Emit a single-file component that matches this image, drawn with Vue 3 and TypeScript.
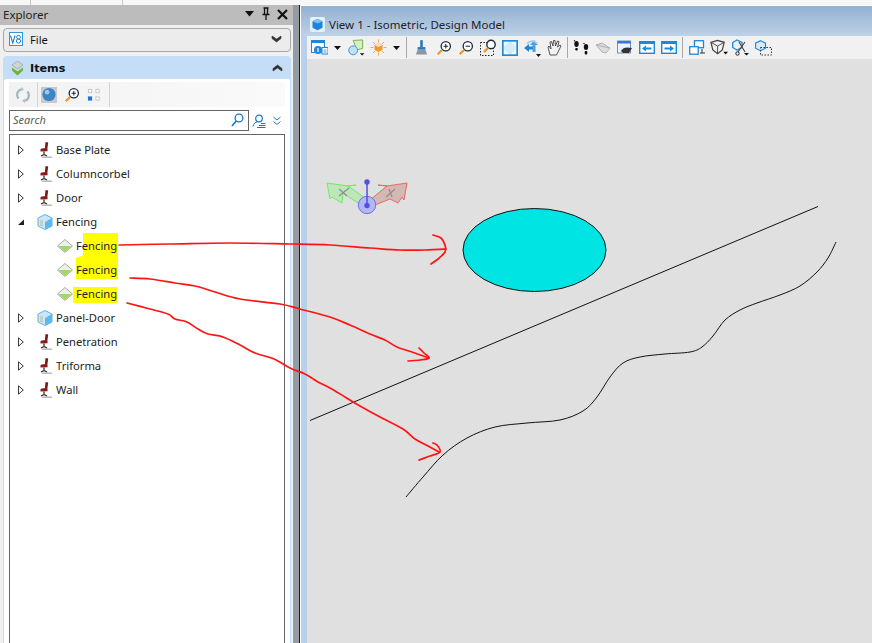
<script setup lang="ts">
interface Row { label: string; icon: 'chair' | 'box' | 'leaf'; arrow: 'closed' | 'open' | 'none'; mark?: string }
const rows: Row[] = [
  { label: 'Base Plate', icon: 'chair', arrow: 'closed' },
  { label: 'Columncorbel', icon: 'chair', arrow: 'closed' },
  { label: 'Door', icon: 'chair', arrow: 'closed' },
  { label: 'Fencing', icon: 'box', arrow: 'open' },
  { label: 'Fencing', icon: 'leaf', arrow: 'none', mark: 'm1' },
  { label: 'Fencing', icon: 'leaf', arrow: 'none', mark: 'm2' },
  { label: 'Fencing', icon: 'leaf', arrow: 'none', mark: 'm3' },
  { label: 'Panel-Door', icon: 'box', arrow: 'closed' },
  { label: 'Penetration', icon: 'chair', arrow: 'closed' },
  { label: 'Triforma', icon: 'chair', arrow: 'closed' },
  { label: 'Wall', icon: 'chair', arrow: 'closed' },
]

type P = [number, number]
function smooth(pts: P[]): string {
  let d = `M${pts[0][0]} ${pts[0][1]}`
  for (let i = 0; i < pts.length - 1; i++) {
    const a = pts[Math.max(i - 1, 0)]
    const b = pts[i]
    const c = pts[i + 1]
    const e = pts[Math.min(i + 2, pts.length - 1)]
    const c1x = b[0] + (c[0] - a[0]) / 6
    const c1y = b[1] + (c[1] - a[1]) / 6
    const c2x = c[0] - (e[0] - b[0]) / 6
    const c2y = c[1] - (e[1] - b[1]) / 6
    d += `C${c1x.toFixed(1)} ${c1y.toFixed(1)} ${c2x.toFixed(1)} ${c2y.toFixed(1)} ${c[0]} ${c[1]}`
  }
  return d
}

const wave = smooth([[406, 497], [423, 477], [443, 455], [467, 438], [495, 427], [527, 423], [560, 420], [583, 411], [597, 397], [610, 377], [623, 363], [640, 357], [665, 354], [690, 352], [702, 347], [713, 336], [725, 320], [740, 310], [757, 303], [780, 295], [800, 286], [817, 272], [828, 258], [836, 242]])
const red = [
  [[119, 245], [170, 244], [230, 243], [290, 244], [330, 245], [370, 248], [400, 250], [425, 250], [446, 249]],
  [[433, 235], [441, 238], [445, 245], [445, 252], [438, 259], [431, 264]],
  [[130, 278], [150, 279], [175, 283], [195, 286], [215, 292], [240, 299], [280, 304], [300, 309], [330, 317], [350, 325], [370, 334], [385, 340], [397, 347], [412, 352], [429, 358]],
  [[419, 348], [424, 353], [429, 358], [420, 360], [408, 361]],
  [[127, 303], [150, 309], [168, 314], [175, 319], [187, 322], [198, 329], [208, 334], [223, 337], [240, 345], [255, 353], [274, 359], [290, 368], [305, 374], [318, 382], [330, 388], [345, 397], [360, 406], [380, 417], [403, 429], [415, 439], [428, 446], [439, 452]],
  [[433, 443], [437, 445], [440, 452], [430, 456], [419, 460]],
].map((p) => smooth(p as P[]))
</script>

<template>
  <div class="screen">
    <div class="topstrip"><i class="tick t1"></i><i class="tick t2"></i></div>
    <div class="main">
      <aside class="explorer">
        <header class="ex-title">
          <span>Explorer</span>
          <div class="ex-tools">
            <svg width="10" height="6" viewBox="0 0 10 6"><path d="M0 0h9L4.500 5.500z" fill="#111"/></svg>
            <svg width="10" height="14" viewBox="0 0 10 14"><path d="M2.500 1h5M3.500 1v6M6.500 1v6M1.500 7.500h7M5 8v5" stroke="#111" stroke-width="1.300" fill="none"/></svg>
            <svg width="11" height="11" viewBox="0 0 11 11"><path d="M1 1l9 9M10 1l-9 9" stroke="#111" stroke-width="2.200"/></svg>
          </div>
        </header>
        <div class="ex-body">
          <div class="file-bar">
            <svg class="v8" width="14" height="14" viewBox="0 0 14 14"><rect x=".5" y=".5" width="13" height="13" fill="#fff" stroke="#2e95e0"/><path d="M1.500 3.500l2.300 7.500 2.300-7.500" fill="none" stroke="#1e7fd0" stroke-width="1.100"/><circle cx="9.500" cy="5.200" r="1.900" fill="none" stroke="#1e7fd0"/><circle cx="9.500" cy="9" r="2.100" fill="none" stroke="#1e7fd0"/></svg>
            <span>File</span>
            <svg class="chev" width="11" height="8" viewBox="0 0 11 8"><path d="M1 1l4.500 3L10 1v2.500L5.500 7 1 3.500z" fill="#333" stroke="#333" stroke-width=".6"/></svg>
          </div>
          <section class="items">
            <div class="items-head">
              <svg width="13" height="15" viewBox="0 0 13 15"><path d="M6.500 0L12 4 6.500 8 1 4z" fill="#cfd4d0" stroke="#8d968e" stroke-width=".6"/><path d="M1 6.500l5.500 4 5.500-4v3l-5.500 5-5.500-5z" fill="#6fb52f"/></svg>
              <b>Items</b>
              <svg class="chev" width="11" height="8" viewBox="0 0 11 8"><path d="M1 7l4.500-3L10 7V4.500L5.500 1 1 4.500z" fill="#333" stroke="#333" stroke-width=".6"/></svg>
            </div>
            <div class="items-card">
              <div class="mini-bar">
                <div class="mini-group first">
                  <svg width="16" height="18" viewBox="0 0 18 20"><path d="M4 14A6.500 6.500 0 0 1 7 3.500M14 6a6.500 6.500 0 0 1-3 10.500" fill="none" stroke="#9fb8bd" stroke-width="2.400"/><path d="M7 1l3 2.500L7 6zM11 14l-3 2.500L11 19z" fill="#aebfc3"/></svg>
                </div>
                <div class="mini-group second">
                  <svg width="16" height="16" viewBox="0 0 17 17"><rect width="17" height="17" fill="#c9c9c9"/><circle cx="8.500" cy="8" r="7" fill="#3d83c5"/><circle cx="6.500" cy="5.500" r="2.500" fill="#9cc8ea"/></svg>
                  <svg width="16" height="16" viewBox="0 0 18 18"><circle cx="11" cy="7" r="5.200" fill="#fff" stroke="#1c2c44" stroke-width="1.500"/><path d="M8.500 7h5M11 4.500v5" stroke="#1c2c44" stroke-width="1.200"/><path d="M7 11l-5 5" stroke="#e79a2c" stroke-width="2.600"/></svg>
                  <svg width="14" height="14" viewBox="0 0 15 15"><g fill="#fff" stroke="#c4c4c4"><rect x="1.500" y="1.500" width="3.500" height="3.500"/><rect x="9.500" y="1.500" width="3.500" height="3.500"/><rect x="9.500" y="9.500" width="3.500" height="3.500"/></g><rect x="1" y="9" width="4.500" height="4.500" fill="#1878d8"/></svg>
                </div>
              </div>
              <div class="search-row">
                <div class="search">
                  <span>Search</span>
                  <svg width="13" height="14" viewBox="0 0 13 14"><circle cx="8" cy="5" r="3.900" fill="none" stroke="#1878c8" stroke-width="1.300"/><path d="M5.200 8L1 13" stroke="#1878c8" stroke-width="1.700"/></svg>
                </div>
                <svg width="14" height="14" viewBox="0 0 14 14"><circle cx="7" cy="4.500" r="3.300" fill="none" stroke="#1878c8" stroke-width="1.200"/><path d="M1 12.500c.5-3 2.500-4.500 4-4.500M9 9.500h4.500M7 11.500h6.500M5 13.500h8.500" fill="none" stroke="#1878c8"/></svg>
                <svg class="dbl" width="8" height="10" viewBox="0 0 8 10"><path d="M.5 1L4 4l3.500-3M.5 5.500L4 8.500l3.500-3" fill="none" stroke="#1878c8"/></svg>
              </div>
              <ul class="tree">
                <li v-for="(r, i) in rows" :key="i" class="row" :class="{ child: r.icon === 'leaf' }">
                  <span v-if="r.icon !== 'leaf'" class="arrow-slot">
                    <svg v-if="r.arrow === 'closed'" width="6" height="10" viewBox="0 0 6 10"><path d="M.5.800L5.300 5 .5 9.200z" fill="#fff" stroke="#3b3b3b"/></svg>
                    <svg v-else width="6" height="10" viewBox="0 0 6 10"><path d="M0 8l6-5.500V8z" fill="#222"/></svg>
                  </span>
                  <span class="ico-slot">
                    <svg v-if="r.icon === 'chair'" width="14" height="16" viewBox="0 0 14 16"><path d="M4 14.500h10v1.500H4z" fill="#bbb"/><path d="M7.500 0l2.700 .6-1.100 8H3.500l-.3-2 3.700-.4z" fill="#7c1418"/><path d="M2.500 7l7 .2v2l-7 .3z" fill="#8f1a1f"/><path d="M6 9.500v3M3 14l3-1.500 3 1.500" stroke="#2a2020" stroke-width="1.200" fill="none"/></svg>
                    <svg v-else-if="r.icon === 'box'" width="16" height="16" viewBox="0 0 16 16"><path d="M8 .5l7 3.500v8l-7 3.500-7-3.500V4z" fill="#c9e7fa" stroke="#58b3ea"/><path d="M8 8l7-4v8l-7 3.500z" fill="#5cb8ef"/><path d="M3 7h3M3 9h3M3 11h3" stroke="#e0a860" stroke-width=".9"/></svg>
                    <svg v-else width="16" height="14" viewBox="0 0 16 14"><path d="M8 .5L15.500 7 8 13.500.5 7z" fill="#eef0ee" stroke="#a5aca6"/><path d="M1.500 7h13L8 13z" fill="#a2d66a"/></svg>
                  </span>
                  <span class="label" :class="r.mark">{{ r.label }}</span>
                </li>
              </ul>
            </div>
          </section>
        </div>
      </aside>

      <div class="split"></div>

      <main class="view">
        <div class="view-inner">
          <header class="view-title">
            <svg width="15" height="15" viewBox="0 0 15 15"><rect width="15" height="15" rx="2" fill="#e6eef6"/><path d="M7.500 2l5 2.300v6.500l-5 2.500-5-2.500V4.300z" fill="#1a84e0"/><path d="M2.500 4.300l5 2.300 5-2.300-5-2.300z" fill="#79c3f4"/></svg>
            <span>View 1 - Isometric, Design Model</span>
          </header>
          <div class="view-body">
            <div class="view-tools">
              <div class="c"><svg width="17" height="15" viewBox="0 0 17 15"><rect x=".5" y=".5" width="13" height="12" fill="#fff" stroke="#1c88dc"/><rect width="14" height="3" fill="#1c88dc"/><circle cx="7" cy="10" r="4" fill="#1c88dc"/><path d="M7 8v4" stroke="#fff" stroke-width="1.200"/><rect x="11" y="7.500" width="6" height="6.500" fill="#fff" stroke="#1c88dc"/><path d="M12.500 10h3M12.500 12h3" stroke="#1c88dc" stroke-width=".8"/></svg></div>
              <div class="c c14"><svg width="7" height="4" viewBox="0 0 7 4"><path d="M0 0h7L3.500 4z" fill="#111"/></svg></div>
              <div class="c c23"><svg width="18" height="17" viewBox="0 0 18 18"><path d="M6 1.500l10-.5v9l-6 1.500z" fill="#d8efc5" stroke="#6fb040"/><circle cx="6" cy="12" r="4.700" fill="#bfe0f6" stroke="#3a92d8"/><path d="M13 15h5l-2.500 2.500z" fill="#111"/></svg></div>
              <div class="c c23"><svg width="17" height="17" viewBox="0 0 17 17"><path d="M8.500.5v3M8.500 13.500v3M.5 8.500h3M13.500 8.500h3M3 3l2 2M12 12l2 2M14 3l-2 2M5 12l-2 2" stroke="#eda94e" stroke-width="1"/><path d="M8.500 4l4 2v5l-4 2-4-2V6z" fill="#f09a2c"/><path d="M8.500 4l4 2-4 2-4-2z" fill="#f8e2b8"/></svg></div>
              <div class="c c13"><svg width="7" height="4" viewBox="0 0 7 4"><path d="M0 0h7L3.500 4z" fill="#111"/></svg></div>
              <i class="sep first-sep"></i>
              <div class="c c24"><svg width="13" height="17" viewBox="0 0 15 17"><path d="M6 0h3v8H6z" fill="#2a78b8"/><path d="M3 8h9v3H3z" fill="#2a78b8"/><path d="M3 11h9l2 5.500H1z" fill="#8a96a8"/></svg></div>
              <div class="c"><svg width="16" height="16" viewBox="0 0 18 18"><circle cx="11" cy="7" r="5.200" fill="#fff" stroke="#1c2c44" stroke-width="1.500"/><path d="M8.500 7h5M11 4.500v5" stroke="#1c2c44" stroke-width="1.200"/><path d="M7 11l-5 5" stroke="#e79a2c" stroke-width="2.600"/></svg></div>
              <div class="c"><svg width="16" height="16" viewBox="0 0 18 18"><circle cx="11" cy="7" r="5.200" fill="#fff" stroke="#1c2c44" stroke-width="1.500"/><path d="M8.500 7h5" stroke="#1c2c44" stroke-width="1.200"/><path d="M7 11l-5 5" stroke="#e79a2c" stroke-width="2.600"/></svg></div>
              <div class="c"><svg width="17" height="17" viewBox="0 0 17 17"><rect x=".5" y="3.500" width="13" height="13" fill="none" stroke="#222" stroke-dasharray="1.500 1.500"/><circle cx="11" cy="5.500" r="4.200" fill="#fff" stroke="#1c2c44" stroke-width="1.400"/><path d="M8 9l-4 4" stroke="#e79a2c" stroke-width="2.400"/></svg></div>
              <div class="c"><svg width="16" height="16" viewBox="0 0 16 16"><rect x=".8" y=".8" width="14.400" height="14.400" fill="#d4ebfb" stroke="#1c88dc" stroke-width="1.600"/><path d="M3 6V3h3M10 3h3v3M13 10v3h-3M6 13H3v-3" fill="none" stroke="#fff" stroke-width="1.400"/></svg></div>
              <div class="c"><svg width="18" height="18" viewBox="0 0 18 18"><path d="M1 9l5-4v2.500h4v3H6V13z" fill="#2384d6"/><path d="M11 1l4 5h-2.500v7h-3V6H7z" fill="#4aa0e4"/><path d="M4 5c3-4 8-4 10 0" fill="none" stroke="#9ccbee" stroke-width="1.400"/><path d="M13 15h5l-2.500 3z" fill="#111"/></svg></div>
              <div class="c"><svg width="15" height="17" viewBox="0 0 15 17"><path d="M3 16L1 8l1-1 2 3-1-7 1.500-.5L6 7 6.500 1.500H8L8.500 7l2-5 1.500.5L10.500 8l2.500-2 1 1-3 6-1.500 3z" fill="#f2f2f2" stroke="#444" stroke-width=".9"/></svg></div>
              <i class="sep"></i>
              <div class="c"><svg width="17" height="16" viewBox="0 0 17 16"><ellipse cx="3.500" cy="4" rx="2.200" ry="3" fill="#111"/><rect x="2.200" y="8" width="2.600" height="2.600" rx="1" fill="#111"/><ellipse cx="13" cy="7" rx="2.200" ry="3" fill="#111"/><rect x="11.700" y="11" width="2.600" height="3.500" rx="1" fill="#111"/><circle cx="1.500" cy=".8" r=".7" fill="#111"/><circle cx="11" cy="3.500" r=".7" fill="#111"/></svg></div>
              <div class="c"><svg width="16" height="12" viewBox="0 0 16 12"><path d="M1 3l6-2 8 5-4 5-4-1z" fill="#dcdcdc" stroke="#b3b3b3"/><path d="M1 3l14 3" stroke="#b3b3b3"/></svg></div>
              <div class="c"><svg width="16" height="16" viewBox="0 0 16 16"><rect x=".5" y="1" width="13" height="12" fill="#eef3fb" stroke="#6c8fd0"/><rect x=".5" y="1" width="13" height="2.500" fill="#3a78d8"/><path d="M4 11c2-4 6-4 11-3l-3 5H6z" fill="#333"/></svg></div>
              <div class="c"><svg width="16" height="13" viewBox="0 0 16 13"><rect x=".7" y=".7" width="14.600" height="11.600" fill="#fff" stroke="#1c88dc" stroke-width="1.400"/><rect y="0" width="16" height="3" fill="#1c88dc"/><path d="M3 7.500l4-3v2h5.500v2H7v2z" fill="#1c88dc"/></svg></div>
              <div class="c"><svg width="16" height="13" viewBox="0 0 16 13"><rect x=".7" y=".7" width="14.600" height="11.600" fill="#fff" stroke="#1c88dc" stroke-width="1.400"/><rect y="0" width="16" height="3" fill="#1c88dc"/><path d="M13 7.500l-4-3v2H3.500v2H9v2z" fill="#1c88dc"/></svg></div>
              <i class="sep last-sep"></i>
              <div class="c"><svg width="16" height="15" viewBox="0 0 16 15"><rect x="5.500" y=".7" width="9" height="7" fill="#fff" stroke="#1c88dc" stroke-width="1.300"/><rect x=".7" y="6.700" width="8.500" height="7.500" fill="#fff" stroke="#1c88dc" stroke-width="1.300"/><path d="M13 9v4M11 13h5" stroke="#333"/></svg></div>
              <div class="c"><svg width="18" height="17" viewBox="0 0 19 17"><path d="M1 3l7-2 7 2-2 8-5 4-5-4z" fill="#f2f2f2" stroke="#444" stroke-width="1.300"/><path d="M1 3l7 4 7-4M8 7v8" fill="none" stroke="#444"/><path d="M14 13h5l-2.500 3z" fill="#111"/></svg></div>
              <div class="c"><svg width="18" height="17" viewBox="0 0 18 17"><path d="M5 1l5 2.500v5L5 11 .7 8.500v-5z" fill="none" stroke="#1c88dc" stroke-width="1.300"/><path d="M6 13l7-10M13 13L7 3" stroke="#444" stroke-width="1.100"/><circle cx="5.500" cy="14.500" r="1.700" fill="none" stroke="#222"/><path d="M12 14h5l-2.500 2.500z" fill="#111"/></svg></div>
              <div class="c"><svg width="17" height="16" viewBox="0 0 17 16"><path d="M5.500 .7l5 2.500v5l-5 2.500-5-2.500v-5z" fill="#d5ebfa" stroke="#1c88dc" stroke-width="1.200"/><rect x="5.500" y="7.500" width="11" height="7.500" fill="none" stroke="#333" stroke-dasharray="1.500 1.500"/></svg></div>
            </div>
            <div class="canvas"></div>
          </div>
        </div>
      </main>
    </div>

    <svg class="overlay" width="872" height="643" viewBox="0 0 872 643">
      <ellipse cx="534.500" cy="250" rx="71.500" ry="41.500" fill="#00e4e4" stroke="#111"/>
      <path d="M310 420.500L818 206.500" stroke="#111" fill="none"/>
      <path :d="wave" fill="none" stroke="#111"/>
      <g class="gizmo">
        <path d="M327 183L348 186 356 185 348 186 365 198 358 203 343 193 342 203 332 197 330 199z" fill="#c0e5b9" stroke="#66ee66"/>
        <path d="M407 183L387 186 378 185 387 186 370 200 375 205 390 199 398 203 402 197 404 200z" fill="#d3b8b4" stroke="#ee6666"/>
        <path d="M339 189l8 7M349 188l-10 8M386 197l9-8M389 189l3 8" stroke="#8e8e8e" stroke-width="1.200" fill="none"/>
        <circle cx="367" cy="205" r="8.700" fill="#b4b8f0" stroke="#6c72ee"/>
        <path d="M367 182v24" stroke="#4d52e0" stroke-width="1.500"/>
        <circle cx="367" cy="182" r="2.700" fill="#4d52e0"/>
        <circle cx="367" cy="205.500" r="2.700" fill="#4d52e0"/>
      </g>
      <path v-for="(d, i) in red" :key="i" :d="d" fill="none" stroke="#ff1414" stroke-width="1.700" stroke-linecap="round"/>
    </svg>
  </div>
</template>

<style scoped>
.screen { position: relative; width: 872px; height: 643px; overflow: hidden; background: #f7f7f7; font-family: "Noto Sans", "Open Sans", sans-serif; }
.topstrip { height: 5px; background: #f7f7f7; display: flex; }
.tick { width: 1px; height: 5px; background: #c8c8c8; }
.t1 { margin-left: 30px; }
.t2 { margin-left: 91px; }
.main { display: flex; height: 638px; }
.explorer { width: 293px; display: flex; flex-direction: column; background: #f0f0f0; }
.ex-title { height: 20px; flex: none; background: #bcbcbc; display: flex; align-items: center; justify-content: space-between; padding: 0 5px 2px 3px; box-sizing: border-box; font-size: 11.500px; color: #222; }
.ex-tools { display: flex; align-items: center; gap: 6px; }
.ex-body { flex: 1; min-height: 0; padding: 3px 2px 0 3px; display: flex; flex-direction: column; gap: 4px; }
.file-bar { height: 24px; flex: none; box-sizing: border-box; border: 1px solid #a8a8a8; border-radius: 4px; background: #ececec; display: flex; align-items: center; padding: 0 8px 2px 5px; font-size: 11.200px; color: #111; }
.file-bar span { margin-left: 7px; flex: 1; }
.items { flex: 1; min-height: 0; display: flex; flex-direction: column; background: #c5ddf6; border-radius: 4px 4px 0 0; padding: 0 1px; }
.items-head { height: 23px; flex: none; box-sizing: border-box; display: flex; align-items: center; padding: 1px 7px 0 7px; color: #111; }
.items-head b { flex: 1; margin-left: 6px; font-family: "DejaVu Sans", sans-serif; font-size: 11.200px; }
.items-card { flex: 1; min-height: 0; background: #fff; padding: 3px 5px 0 5px; display: flex; flex-direction: column; border-radius: 2px 2px 0 0; }
.mini-bar { display: flex; height: 25px; flex: none; background: linear-gradient(90deg, #f2f2f2, #fafafa); }
.mini-group { display: flex; align-items: center; border-right: 1px solid #d4d4d4; }
.mini-group.first { width: 29px; box-sizing: border-box; justify-content: center; }
.mini-group.second { gap: 7px; padding: 0 8px 0 3px; }
.search-row { display: flex; align-items: center; margin-top: 3px; height: 21px; flex: none; }
.search { width: 240px; height: 21px; border: 1px solid #646464; box-sizing: border-box; display: flex; align-items: center; justify-content: space-between; padding: 0 4px 2px 3px; margin-right: 3px; font-size: 11px; font-style: italic; color: #5c5c5c; background: #fff; }
.dbl { margin-left: 7px; }
.tree { list-style: none; margin: 3px 0 0; padding: 3px 0 0; flex: 1; min-height: 0; width: 276px; border: 1px solid #646464; border-bottom: 0; box-sizing: border-box; background: #fff; isolation: isolate; }
.row { height: 24px; display: flex; align-items: center; padding-left: 8px; font-size: 11.200px; color: #222; }
.arrow-slot { width: 6px; margin-right: 12px; display: flex; flex: none; }
.ico-slot { width: 18px; display: flex; justify-content: center; flex: none; }
.row.child { padding-left: 46px; }
.label { margin-left: 2px; line-height: 16px; position: relative; }
.m1::before, .m2::before, .m3::before { content: ""; position: absolute; z-index: -1; background: #ffff00; }
.m1::before { left: 0; width: 42px; top: -5px; height: 30px; clip-path: polygon(7px 0, 100% 0, 100% 100%, 0 100%, 0 83%, 7px 75%); }
.m2::before { left: 0; width: 42px; top: 1px; height: 16px; }
.m3::before { left: -3px; width: 44px; top: 1px; height: 16px; }
.split { width: 6px; flex: none; background: #939ba3; }
.view { flex: 1; display: flex; border-left: 1px solid #1c1c1c; }
.view-inner { flex: 1; display: flex; flex-direction: column; border-left: 1px solid #fff; border-top: 1px solid #fff; border-radius: 4px 0 0 0; background: #b8d0ea; min-width: 0; }
.view-title { height: 30px; flex: none; box-sizing: border-box; display: flex; align-items: center; gap: 4px; padding: 7px 0 0 9px; font-size: 11.500px; color: #222; background: linear-gradient(#93b1d1, #bed1e7); }
.view-body { flex: 1; min-height: 0; display: flex; flex-direction: column; padding-left: 6px; }
.view-tools { height: 23px; flex: none; background: #f1f1f1; display: flex; align-items: center; padding-left: 1px; }
.c { width: 22px; height: 20px; flex: none; display: flex; align-items: center; justify-content: center; }
.c.c14 { width: 14px; }
.c.c23 { width: 23px; }
.c.c13 { width: 13px; }
.c.c24 { width: 24px; }
.sep { width: 1px; height: 21px; background: #a8a8a8; margin: 0 2px; flex: none; }
.first-sep { margin-left: 3px; }
.last-sep { margin-right: 3px; }
.canvas { flex: 1; background: #e0e0e0; }
.overlay { position: absolute; left: 0; top: 0; pointer-events: none; }
</style>
